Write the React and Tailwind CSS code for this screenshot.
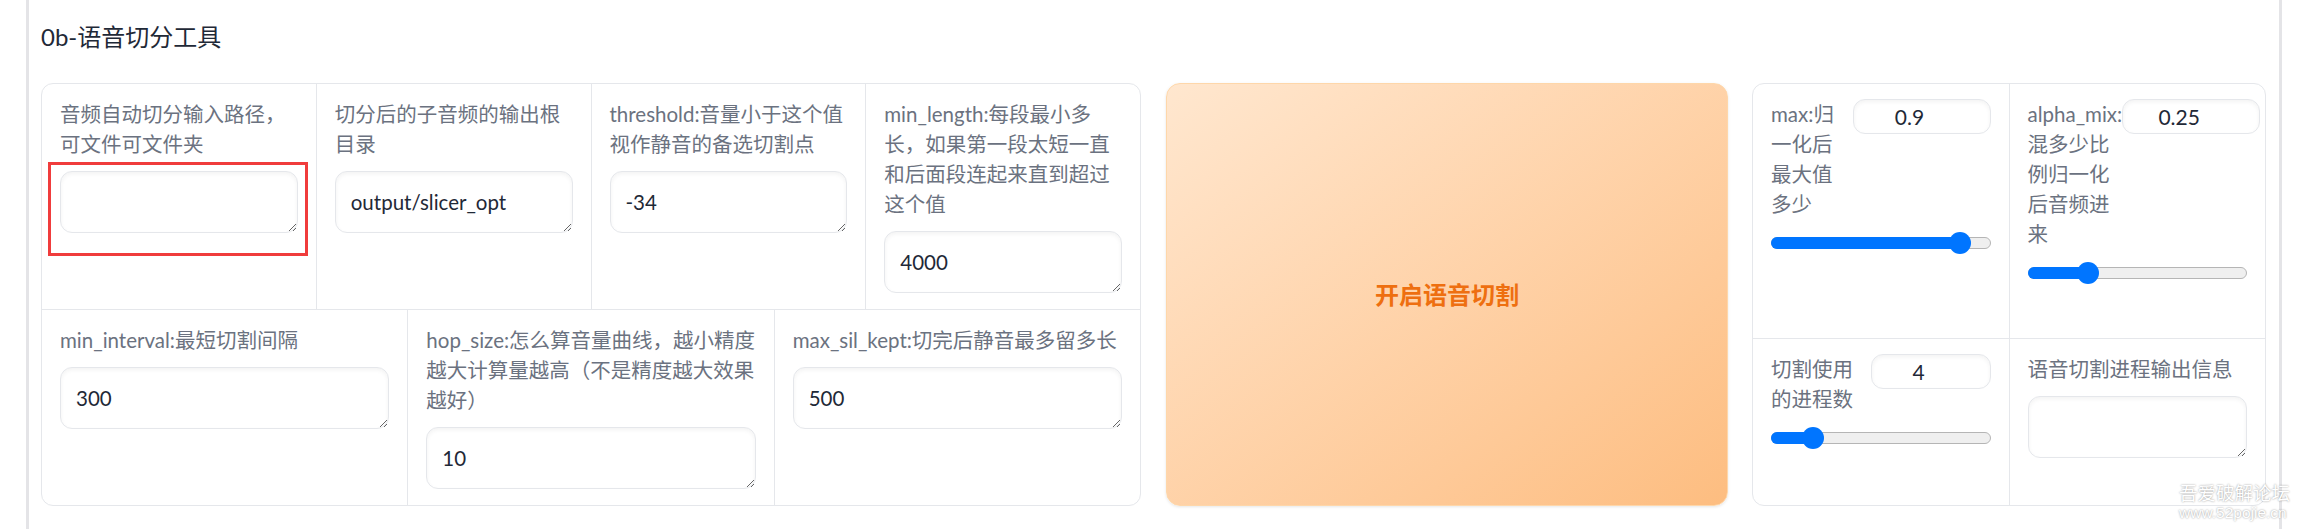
import React from 'react';

const FONT = "font-['Lato','Noto_Sans_CJK_SC',sans-serif]";

function Label({ lines, className = '' }) {
  return (
    <div className={`text-[20.5px] leading-[30px] text-[#6b7280] whitespace-nowrap ${className}`}>
      {lines.map((l, i) => (
        <div key={i}>{l}</div>
      ))}
    </div>
  );
}

function Box({ value = '' }) {
  return (
    <textarea
      readOnly
      rows={1}
      defaultValue={value}
      className="mt-[12px] block h-[62px] w-full rounded-[12px] border border-[#e5e7eb] bg-white px-[15px] py-[15px] text-[20.5px] leading-[30px] text-[#1f2937] shadow-[inset_0_2px_4px_rgba(0,0,0,0.05)] outline-none"
    />
  );
}

function Field({ lines, value }) {
  return (
    <div className="min-w-0 flex-1 px-[18px] pt-[15px] pb-[16px]">
      <Label lines={lines} />
      <Box value={value} />
    </div>
  );
}

function NumberBox({ value, w }) {
  return (
    <div
      className={`flex h-[35px] shrink-0 items-center justify-center rounded-[12px] border border-[#e5e7eb] bg-white pr-[24px] text-[21px] text-[#1f2937] shadow-[inset_0_2px_4px_rgba(0,0,0,0.05)] ${w}`}
    >
      {value}
    </div>
  );
}

function Slider({ frac }) {
  return (
    <div className="relative mt-[12px] h-[24px] w-full">
      <div className="absolute left-0 right-0 top-[6px] h-[12px] rounded-full border border-[#b5b5b5] bg-[#efefef]" />
      <div
        className="absolute left-0 top-[6px] h-[12px] rounded-full bg-[#0075ff]"
        style={{ width: `calc(11px + ${frac} * (100% - 22px))` }}
      />
      <div
        className="absolute top-px h-[22px] w-[22px] rounded-full bg-[#0075ff]"
        style={{ left: `calc(${frac} * (100% - 22px))` }}
      />
    </div>
  );
}

export default function App() {
  return (
    <div className={`relative h-[529px] w-[2299px] overflow-hidden bg-white ${FONT}`}>
      <div className="ml-[26px] h-full w-[2256px] border-x-[3px] border-[#e4e4e7] px-[12px] pt-[19px]">
        <h3 className="text-[24px] leading-[36px] text-[#1f2937]">0b-语音切分工具</h3>

        <div className="mt-[28px] flex h-[423px] items-stretch">
          {/* parameters */}
          <div className="flex w-[1100px] flex-col divide-y divide-[#e5e7eb] rounded-[12px] border border-[#e5e7eb]">
            <div className="flex divide-x divide-[#e5e7eb]">
              <Field lines={['音频自动切分输入路径，', '可文件可文件夹']} />
              <Field lines={['切分后的子音频的输出根', '目录']} value="output/slicer_opt" />
              <Field lines={['threshold:音量小于这个值', '视作静音的备选切割点']} value="-34" />
              <Field
                lines={['min_length:每段最小多', '长，如果第一段太短一直', '和后面段连起来直到超过', '这个值']}
                value="4000"
              />
            </div>
            <div className="flex flex-1 divide-x divide-[#e5e7eb]">
              <Field lines={['min_interval:最短切割间隔']} value="300" />
              <Field
                lines={['hop_size:怎么算音量曲线，越小精度', '越大计算量越高（不是精度越大效果', '越好）']}
                value="10"
              />
              <Field lines={['max_sil_kept:切完后静音最多留多长']} value="500" />
            </div>
          </div>

          {/* run button */}
          <button className="ml-[25px] flex w-[562px] items-center justify-center rounded-[14px] border border-[#fed7aa] bg-linear-to-br from-[#ffe7cf] to-[#fdbd80] text-[24px] font-bold text-[#ee6f10] shadow-[0_1px_3px_rgba(0,0,0,0.1)]">
            开启语音切割
          </button>

          {/* options */}
          <div className="ml-[24px] flex w-[514px] flex-col divide-y divide-[#e5e7eb] rounded-[12px] border border-[#e5e7eb]">
            <div className="flex h-[255px] divide-x divide-[#e5e7eb]">
              <div className="min-w-0 flex-1 px-[18px] pt-[15px]">
                <div className="flex items-start">
                  <Label lines={['max:归', '一化后', '最大值', '多少']} className="w-[82px]" />
                  <NumberBox value="0.9" w="w-[138px]" />
                </div>
                <Slider frac={0.9} />
              </div>
              <div className="min-w-0 flex-1 px-[18px] pt-[15px]">
                <div className="flex items-start">
                  <Label lines={['alpha_mix:', '混多少比', '例归一化', '后音频进', '来']} className="w-[95px]" />
                  <NumberBox value="0.25" w="w-[138px]" />
                </div>
                <Slider frac={0.25} />
              </div>
            </div>
            <div className="flex flex-1 divide-x divide-[#e5e7eb]">
              <div className="min-w-0 flex-1 px-[18px] pt-[15px]">
                <div className="flex items-start">
                  <Label lines={['切割使用', '的进程数']} className="w-[100px]" />
                  <NumberBox value="4" w="w-[120px]" />
                </div>
                <Slider frac={0.158} />
              </div>
              <Field lines={['语音切割进程输出信息']} />
            </div>
          </div>
        </div>
      </div>

      {/* annotation */}
      <div className="pointer-events-none absolute left-[48px] top-[162px] h-[94px] w-[260px] border-[3px] border-[#f03c3c]" />

      {/* watermark */}
      <div className="pointer-events-none absolute left-[2179px] top-[482px] text-white [text-shadow:0_0_2px_rgba(0,0,0,0.45)]">
        <div className="text-[18.5px] leading-[22px]">吾爱破解论坛</div>
        <div className="font-['Liberation_Sans',sans-serif] text-[15.5px] leading-[18px]">www.52pojie.cn</div>
      </div>
    </div>
  );
}
